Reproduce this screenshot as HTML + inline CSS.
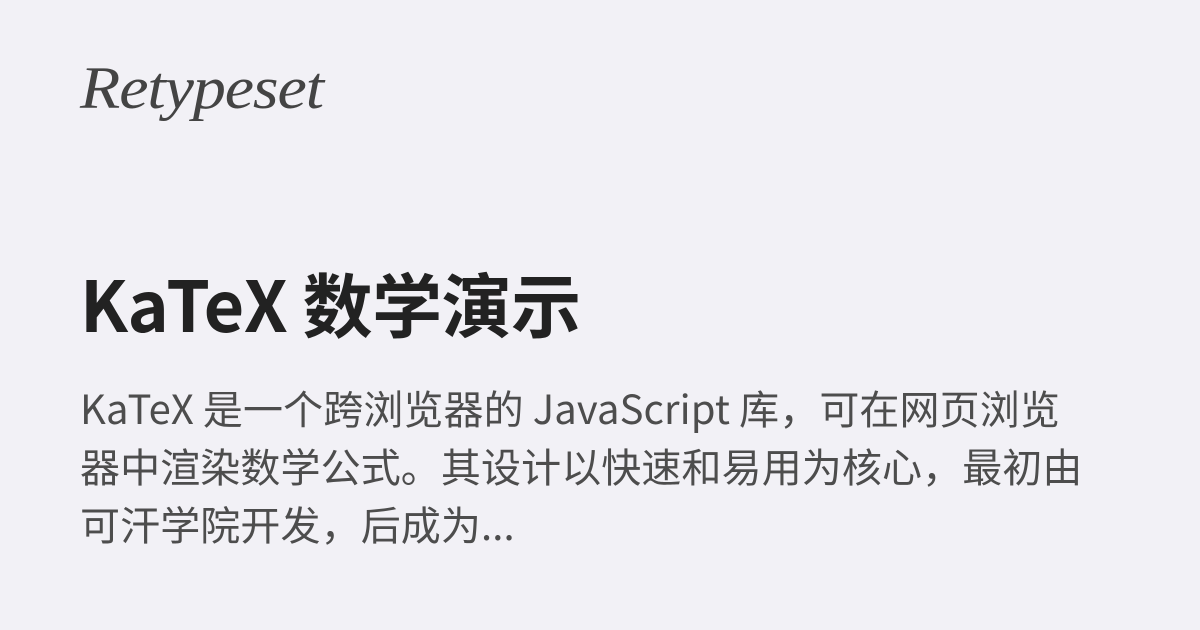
<!DOCTYPE html>
<html><head><meta charset="utf-8"><style>
html,body{margin:0;padding:0}
body{width:1200px;height:630px;background:#f2f1f6;position:relative;overflow:hidden;font-family:"Noto Sans CJK SC","Liberation Sans",sans-serif}
.logo{position:absolute;left:80px;top:54px;font-family:"Liberation Serif",serif;font-style:italic;font-size:60px;color:#444;letter-spacing:-1px;transform:scaleX(1.1);transform-origin:left}
h1{position:absolute;left:80px;top:253px;margin:0;font-size:70px;font-weight:700;color:#222;line-height:100px;letter-spacing:-0.5px}
p{position:absolute;left:80px;top:378px;margin:0;width:1100px;font-size:40px;line-height:58px;color:#4d4d4d;letter-spacing:0.1px}
</style></head><body>
<div class="logo">Retypeset</div>
<h1>KaTeX 数学演示</h1>
<p>KaTeX 是一个跨浏览器的 JavaScript 库，可在网页浏览<br>器中渲染数学公式。其设计以快速和易用为核心，最初由<br>可汗学院开发，后成为...</p>
</body></html>
